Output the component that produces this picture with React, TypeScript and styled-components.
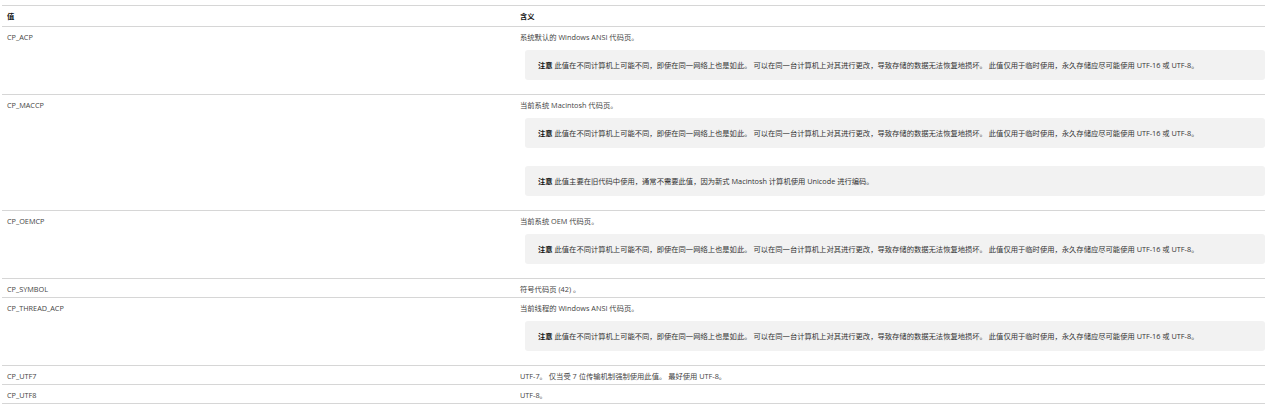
import styled, { createGlobalStyle } from 'styled-components';

const GlobalStyle = createGlobalStyle`
  body {
    margin: 0;
    background: #fff;
    font-family: "Segoe UI", "Open Sans", "Noto Sans CJK SC", sans-serif;
    color: #333;
  }
`;

const Page = styled.div`
  padding: 5px 0 0 2px;
`;

const Table = styled.table`
  width: 1263px;
  border-collapse: collapse;
  table-layout: fixed;
  font-size: 7.3px;
  line-height: 10px;
`;

const HeadCell = styled.th<{ $w?: number }>`
  text-align: left;
  font-weight: 700;
  color: #111;
  padding: 5px 5px 5px;
  border-top: 1px solid #d6d6d6;
  border-bottom: 1px solid #d6d6d6;
  width: ${({ $w }) => ($w ? `${$w}px` : 'auto')};
`;

const Row = styled.tr`
  border-bottom: 1px solid #d6d6d6;
`;

const Cell = styled.td<{ $last?: boolean }>`
  vertical-align: top;
  padding: 5px ${({ $last }) => ($last ? '0' : '5px')} 3px 5px;
  color: #444;
`;

const Note = styled.div`
  background: #f2f2f2;
  border-radius: 3px;
  margin: 8px 0 18px 5px;
  padding: 10px 13px;
  color: #333;
  &:last-child {
    margin-bottom: 11px;
  }
  b {
    color: #111;
    font-weight: 700;
  }
`;

const ANSI_NOTE =
  '此值在不同计算机上可能不同，即使在同一网络上也是如此。 可以在同一台计算机上对其进行更改，导致存储的数据无法恢复地损坏。 此值仅用于临时使用，永久存储应尽可能使用 UTF-16 或 UTF-8。';

const rows: { name: string; text: string; notes: string[] }[] = [
  { name: 'CP_ACP', text: '系统默认的 Windows ANSI 代码页。', notes: [ANSI_NOTE] },
  {
    name: 'CP_MACCP',
    text: '当前系统 Macintosh 代码页。',
    notes: [ANSI_NOTE, '此值主要在旧代码中使用，通常不需要此值，因为新式 Macintosh 计算机使用 Unicode 进行编码。'],
  },
  { name: 'CP_OEMCP', text: '当前系统 OEM 代码页。', notes: [ANSI_NOTE] },
  { name: 'CP_SYMBOL', text: '符号代码页 (42) 。', notes: [] },
  { name: 'CP_THREAD_ACP', text: '当前线程的 Windows ANSI 代码页。', notes: [ANSI_NOTE] },
  { name: 'CP_UTF7', text: 'UTF-7。 仅当受 7 位传输机制强制使用此值。 最好使用 UTF-8。', notes: [] },
  { name: 'CP_UTF8', text: 'UTF-8。', notes: [] },
];

export default function App() {
  return (
    <Page>
      <GlobalStyle />
      <Table>
        <thead>
          <tr>
            <HeadCell $w={503}>值</HeadCell>
            <HeadCell>含义</HeadCell>
          </tr>
        </thead>
        <tbody>
          {rows.map((r) => (
            <Row key={r.name}>
              <Cell>{r.name}</Cell>
              <Cell $last>
                <div>{r.text}</div>
                {r.notes.map((n, i) => (
                  <Note key={i}>
                    <b>注意</b> {n}
                  </Note>
                ))}
              </Cell>
            </Row>
          ))}
        </tbody>
      </Table>
    </Page>
  );
}
